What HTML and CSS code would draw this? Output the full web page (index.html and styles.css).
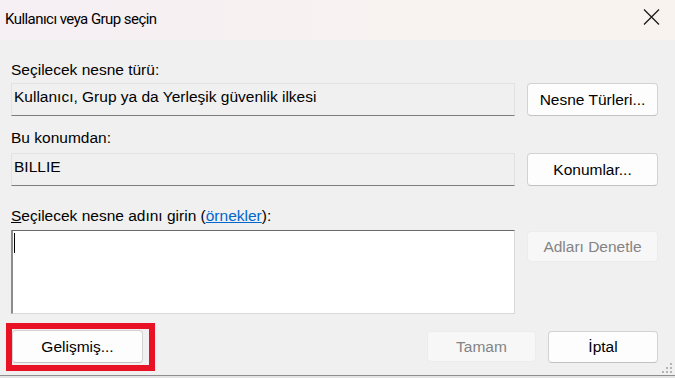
FILE: index.html
```html
<!DOCTYPE html>
<html lang="tr">
<head>
<meta charset="utf-8">
<title>Kullanıcı veya Grup seçin</title>
<link rel="stylesheet" href="styles.css">
</head>
<body>
<div class="window">
  <div class="titlebar">
    <span class="title">Kullanıcı veya Grup seçin</span>
    <svg class="close" width="17" height="16" viewBox="0 0 17 16"><path d="M1 0.5 L16 15.5 M16 0.5 L1 15.5" stroke="#1b1b1b" stroke-width="1.3" fill="none"/></svg>
  </div>
  <div class="body">
    <div class="label l1">Seçilecek nesne türü:</div>
    <div class="row r1">
      <div class="field">Kullanıcı, Grup ya da Yerleşik güvenlik ilkesi</div>
      <button class="btn">Nesne Türleri...</button>
    </div>
    <div class="label l2">Bu konumdan:</div>
    <div class="row r2">
      <div class="field">BILLIE</div>
      <button class="btn">Konumlar...</button>
    </div>
    <div class="label l3"><u>S</u>eçilecek nesne adını girin (<a class="link">örnekler</a>):</div>
    <div class="row r3">
      <div class="input"><span class="caret"></span></div>
      <button class="btn disabled check">Adları Denetle</button>
    </div>
    <div class="actions">
      <div class="adv-wrap">
        <button class="btn adv">Gelişmiş...</button>
        <span class="highlight"></span>
      </div>
      <div class="spacer"></div>
      <button class="btn disabled ok">Tamam</button>
      <button class="btn cancel">İptal</button>
    </div>
  </div>
  <div class="bottom">
    <svg class="grip" width="14" height="14" viewBox="0 0 14 14">
      <rect x="10" y="1" width="2" height="2" fill="#b4b4b4"/>
      <rect x="6" y="5" width="2" height="2" fill="#b4b4b4"/>
      <rect x="10" y="5" width="2" height="2" fill="#b4b4b4"/>
      <rect x="2" y="9" width="2" height="2" fill="#b4b4b4"/>
      <rect x="6" y="9" width="2" height="2" fill="#b4b4b4"/>
      <rect x="10" y="9" width="2" height="2" fill="#b4b4b4"/>
    </svg>
  </div>
</div>
</body>
</html>
```

FILE: styles.css
```css
* { box-sizing: border-box; }
html, body { margin: 0; padding: 0; }
body {
  width: 675px;
  height: 378px;
  overflow: hidden;
  background: #f0f0f0;
  font-family: "Liberation Sans", Arial, sans-serif;
  font-size: 15.5px;
  color: #000;
}
.window {
  position: relative;
  height: 378px;
  display: flex;
  flex-direction: column;
  background: #f0f0f0;
}
.titlebar {
  height: 40px;
  flex: none;
  display: flex;
  align-items: center;
  justify-content: space-between;
  padding: 0 15px 0 5px;
  background: linear-gradient(90deg, #f6eff4 0%, #f8f2f1 60%, #f8f3ee 100%);
}
.title {
  font-family: Roboto, "Noto Sans", sans-serif;
  font-size: 15px;
  letter-spacing: -0.55px;
  color: #000;
  margin-top: -3px;
}
.close { display: block; margin-top: -6px; }
.body {
  padding: 0 17px 0 11px;
  flex: 1;
}
.label {
  height: 20px;
  line-height: 20px;
  white-space: nowrap;
}
.l1 { margin-top: 20px; }
.l2 { margin-top: 12px; }
.l3 { margin-top: 20px; }
.link { color: #0066cc; text-decoration: underline; }
.row {
  display: grid;
  grid-template-columns: 1fr 131px;
  column-gap: 12px;
  align-items: start;
}
.r1 { margin-top: 3px; }
.r2 { margin-top: 5px; }
.r3 { margin-top: 4px; }
.field {
  height: 33px;
  padding: 3px 3px 0 2px;
  line-height: 20px;
  background: #f0f0f0;
  border: 1px solid #e2e2e2;
  border-bottom: 1px solid #7d7d7d;
  white-space: nowrap;
}
.btn {
  font: inherit;
  color: #000;
  height: 33px;
  padding: 0;
  margin: 0;
  background: #fdfdfd;
  border: 1px solid #d2d2d2;
  border-bottom-color: #c2c2c2;
  border-radius: 4px;
  line-height: 20px;
  text-align: center;
  white-space: nowrap;
}
.btn.disabled {
  background: #f7f7f7;
  border-color: #ececec;
  color: #848484;
}
.input {
  height: 84px;
  background: #fff;
  border-top: 1px solid #6a6a6a;
  border-left: 2px solid #8c8c8c;
  border-right: 1px solid #d9d9d9;
  border-bottom: 1px solid #d9d9d9;
  padding: 2px 0 0 1px;
}
.caret {
  display: block;
  width: 1px;
  height: 20px;
  background: #000;
}
.check { height: 31px; margin-top: 1px; }
.actions {
  margin-top: 16px;
  display: flex;
  align-items: flex-start;
  gap: 12px;
}
.adv-wrap {
  position: relative;
  margin-left: 1px;
}
.adv { width: 131px; display: block; }
.highlight {
  position: absolute;
  left: -6px;
  top: -7px;
  right: -12px;
  bottom: -8px;
  border: 6px solid #e81224;
  pointer-events: none;
}
.spacer { flex: 1; }
.ok { width: 109px; height: 31px; margin-top: 1px; }
.cancel { width: 110px; height: 32px; margin-top: 1px; }
.bottom {
  flex: none;
  height: 3px;
  position: relative;
  border-top: 1px solid #8f8f8f;
  background: #e4e4e4;
}
.grip {
  position: absolute;
  right: 1px;
  bottom: 2px;
}
```
